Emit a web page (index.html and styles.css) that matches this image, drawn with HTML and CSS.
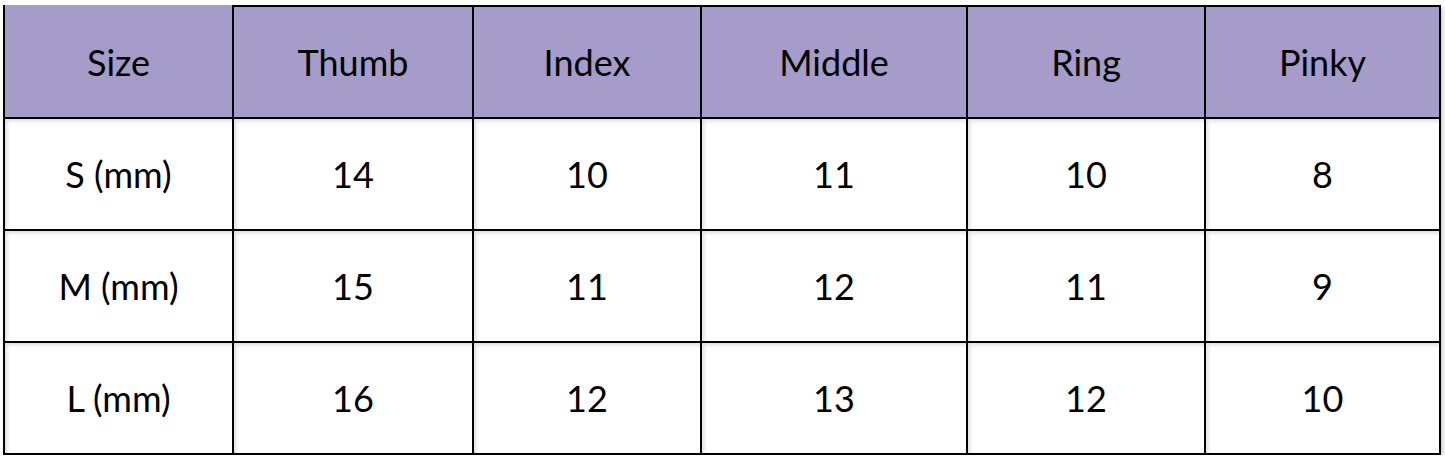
FILE: index.html
```html
<!DOCTYPE html>
<html lang="en">
<head>
<meta charset="utf-8">
<title>Sizes</title>
<link rel="stylesheet" href="styles.css">
</head>
<body>
<div class="sheet">
  <div class="grid">
    <div class="cell head first">Size</div>
    <div class="cell head">Thumb</div>
    <div class="cell head">Index</div>
    <div class="cell head">Middle</div>
    <div class="cell head">Ring</div>
    <div class="cell head">Pinky</div>

    <div class="cell">S (mm)</div>
    <div class="cell">14</div>
    <div class="cell">10</div>
    <div class="cell">11</div>
    <div class="cell">10</div>
    <div class="cell">8</div>

    <div class="cell">M (mm)</div>
    <div class="cell">15</div>
    <div class="cell">11</div>
    <div class="cell">12</div>
    <div class="cell">11</div>
    <div class="cell">9</div>

    <div class="cell">L (mm)</div>
    <div class="cell">16</div>
    <div class="cell">12</div>
    <div class="cell">13</div>
    <div class="cell">12</div>
    <div class="cell">10</div>
  </div>
</div>
</body>
</html>
```

FILE: styles.css
```css
html, body {
  margin: 0;
  padding: 0;
  background: #ffffff;
}

.sheet {
  padding: 5px 0 0 3px;
}

.grid {
  display: grid;
  grid-template-columns: 227px 238px 226px 264px 236px 233px;
  grid-auto-rows: 110px;
  gap: 2px;
  padding: 2px;
  background: #000000;
  width: max-content;
  box-shadow: 2px 3px 4px rgba(0, 0, 0, 0.22);
}

.cell {
  display: flex;
  align-items: center;
  justify-content: center;
  background: #ffffff;
  font-family: "Lato", "Liberation Sans", sans-serif;
  font-size: 36px;
  color: #000000;
  box-shadow: inset 3px 3px 4px -1px rgba(0, 0, 0, 0.14);
}

.cell.head {
  background: #a59cc9;
  box-shadow: none;
}

.cell.head.first {
  box-shadow: 0 -2px 0 #a59cc9;
}
```
